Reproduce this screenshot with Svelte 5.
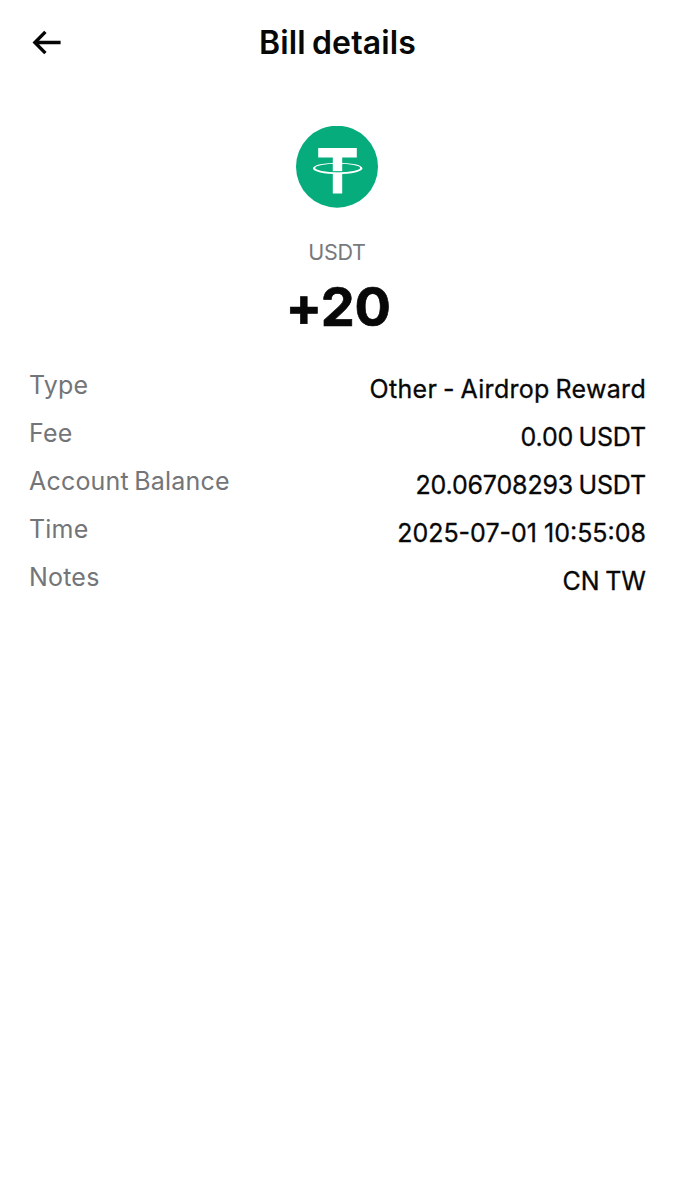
<script>
  const bill = {
    coin: 'USDT',
    amount: '+20'
  }

  const rows = [
    { id: 'type', label: 'Type', value: 'Other - Airdrop Reward' },
    { id: 'fee', label: 'Fee', value: '0.00 USDT' },
    { id: 'balance', label: 'Account Balance', value: '20.06708293 USDT' },
    { id: 'time', label: 'Time', value: '2025-07-01 10:55:08' },
    { id: 'notes', label: 'Notes', value: 'CN TW' }
  ]
</script>

<main class="page">
  <header class="topbar">
    <button class="back" aria-label="Back">
      <svg width="30" height="26" viewBox="0 0 30 26" fill="none" stroke="#050505" stroke-width="3.4">
        <path d="M13.4 1.9 2.9 12.5l10.5 10.6M3.4 12.5h25.2" />
      </svg>
    </button>
    <h1>Bill details</h1>
  </header>

  <section class="summary">
    <svg class="coin" width="82" height="82" viewBox="0 0 82 82">
      <circle cx="41" cy="40.7" r="41" fill="#06ac7c" />
      <path
        d="M16.9 42.4a24.8 5.7 0 1 0 49.6 0a24.8 5.7 0 1 0-49.6 0zM19.2 42a22.5 4.2 0 1 1 45 0a22.5 4.2 0 1 1-45 0z"
        fill="#fff"
        fill-rule="evenodd"
      />
      <path d="M22.2 22h38.6v9.5H46.2v14h-9.4v-14H22.2zM36.8 47h9.4v20.6h-9.4z" fill="#fff" />
      <path d="M36.8 45.6h9.4" stroke="#06ac7c" stroke-width=".8" />
    </svg>
    <span class="symbol">{bill.coin}</span>
    <strong class="amount">{bill.amount}</strong>
  </section>

  <dl class="rows">
    {#each rows as row (row.id)}
      <div class="row {row.id}">
        <dt>{row.label}</dt>
        <dd>{row.value}</dd>
      </div>
    {/each}
  </dl>
</main>

<style>
  :global(body) { background: #fff; }

  .page {
    min-height: 1200px;
    box-sizing: border-box;
    font-family: Inter, "Liberation Sans", sans-serif;
    color: #080808;
    background: #fff;
  }

  .topbar {
    display: grid;
    grid-template-columns: 64px 1fr 64px;
    align-items: center;
    height: 85px;
  }

  .back {
    display: flex;
    justify-content: flex-end;
    padding: 0 2px 0 0;
    border: 0;
    background: none;
  }

  h1 {
    margin: 0;
    font-size: 32px;
    font-weight: 600;
    line-height: 40px;
    letter-spacing: 0.15px;
    word-spacing: -2px;
    text-align: center;
  }

  .summary {
    display: flex;
    flex-direction: column;
    align-items: center;
    padding: 41px 1px 0 0;
  }

  .symbol {
    margin-top: 30px;
    font-size: 21.5px;
    line-height: 28px;
    letter-spacing: -0.3px;
    color: #77797c;
  }

  .amount {
    margin-top: 8px;
    padding-left: 2px;
    font-size: 54px;
    font-weight: 700;
    line-height: 66px;
    letter-spacing: -0.3px;
    -webkit-text-stroke: 0.7px currentColor;
  }

  .rows {
    margin: 0;
    padding: 29px 29px 0;
  }

  .row {
    display: flex;
    justify-content: space-between;
    height: 48px;
    font-size: 25px;
    line-height: 32px;
    white-space: nowrap;
  }

  dt {
    letter-spacing: 0.2px;
    word-spacing: -2px;
    color: #737578;
  }

  dd {
    margin: 0;
    padding-top: 4px;
    word-spacing: -1.5px;
    -webkit-text-stroke: 0.3px currentColor;
  }

  .type dd { letter-spacing: 0.3px; }

  .fee dd,
  .balance dd { letter-spacing: -0.15px; }

  .time dd { word-spacing: 0; }
</style>
